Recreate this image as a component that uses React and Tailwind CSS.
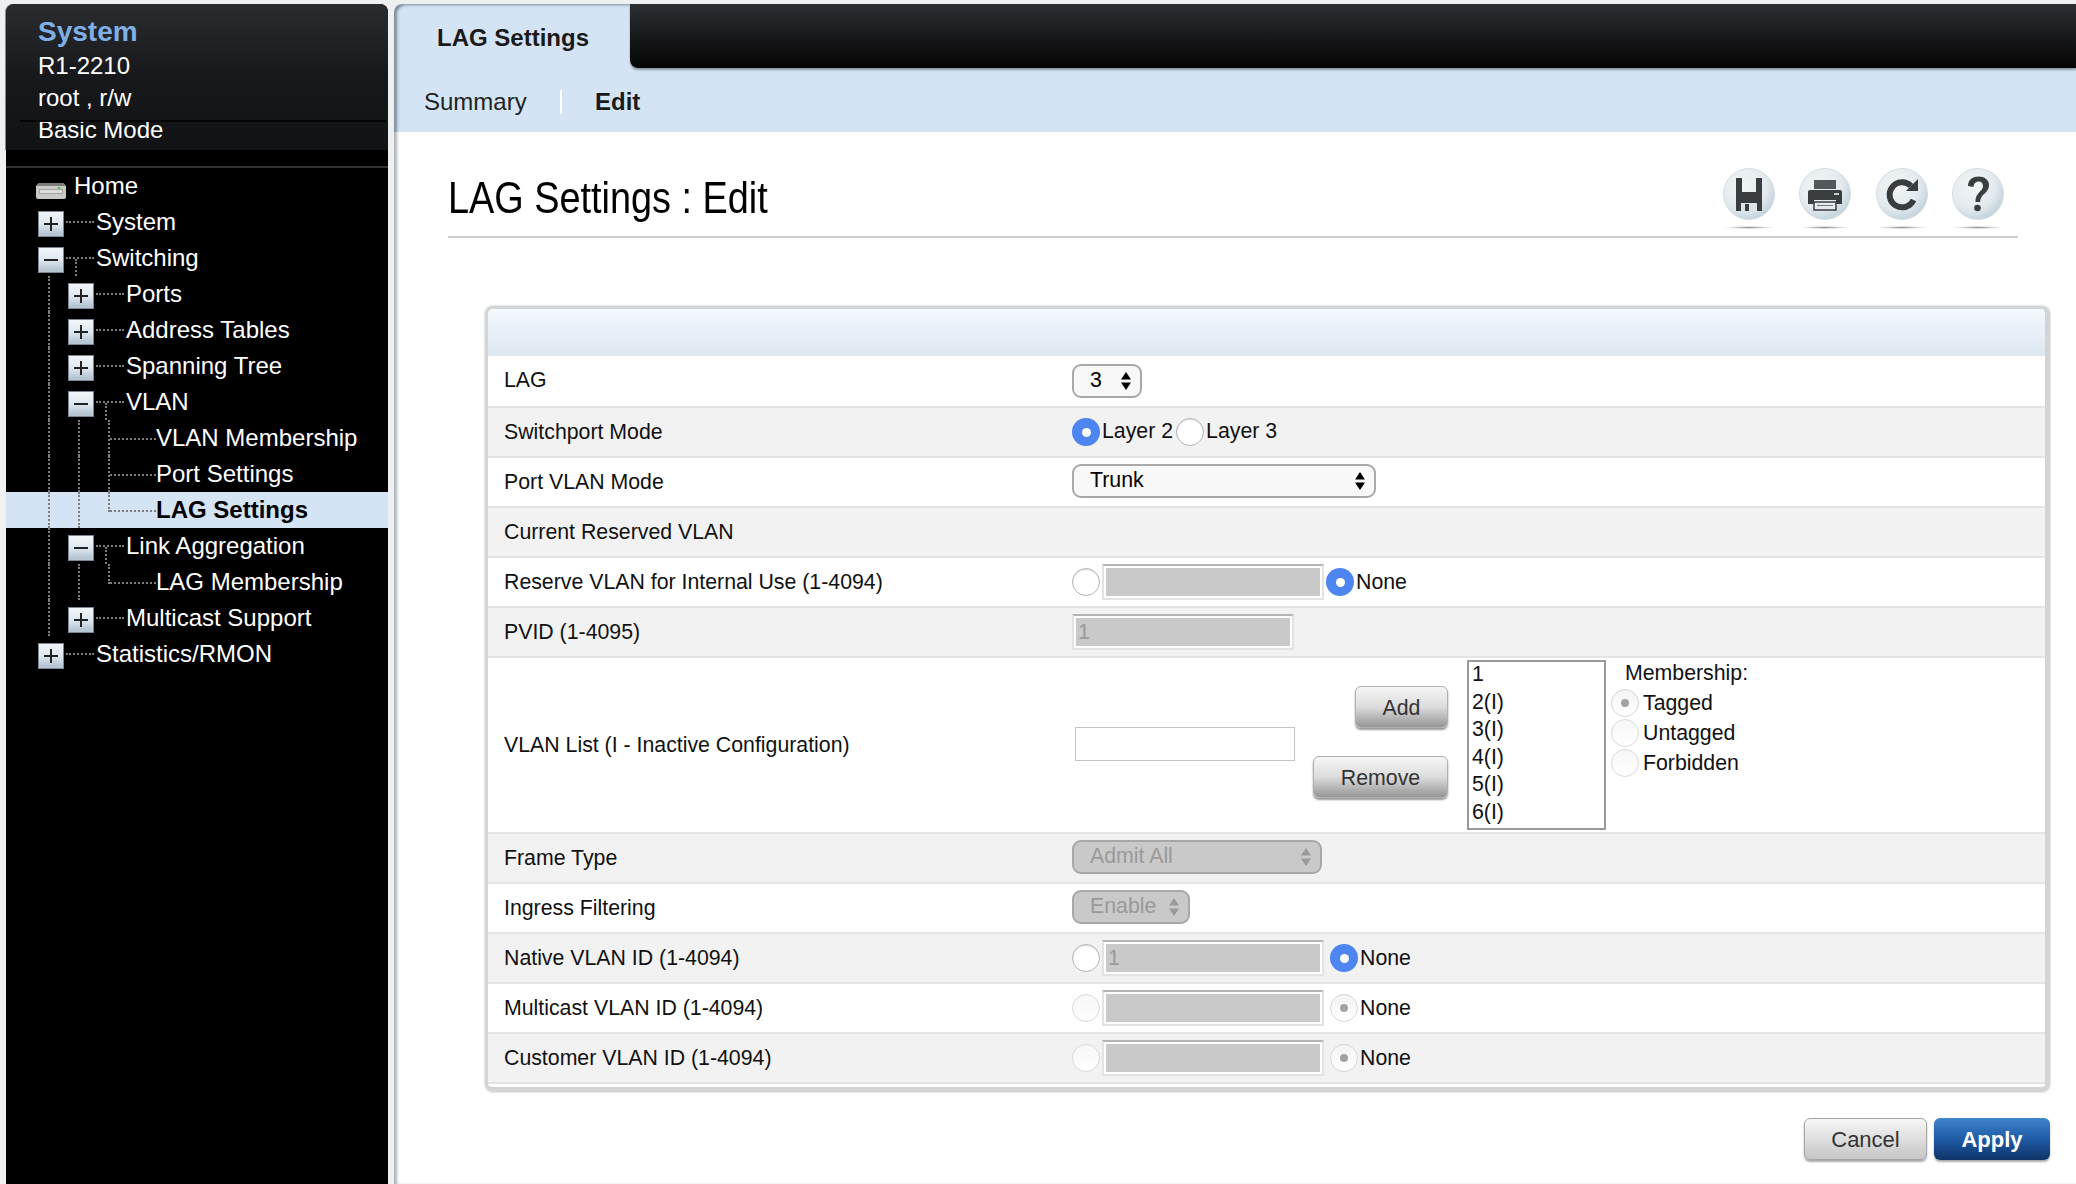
import React from 'react';

const tree = [
    { label: 'System', guides: 0, box: 'plus' },
    { label: 'Switching', guides: 0, box: 'minus', stub: true },
    { label: 'Ports', guides: 1, box: 'plus' },
    { label: 'Address Tables', guides: 1, box: 'plus' },
    { label: 'Spanning Tree', guides: 1, box: 'plus' },
    { label: 'VLAN', guides: 1, box: 'minus', stub: true },
    { label: 'VLAN Membership', guides: 2 },
    { label: 'Port Settings', guides: 2 },
    { label: 'LAG Settings', guides: 2, active: true, last: true },
    { label: 'Link Aggregation', guides: 1, box: 'minus', stub: true },
    { label: 'LAG Membership', guides: 2, last: true },
    { label: 'Multicast Support', guides: 1, box: 'plus' },
    { label: 'Statistics/RMON', guides: 0, box: 'plus' },
];

const Guide = () => (
    <div className="w-[30px] h-full shrink-0">
        <div className="ml-[10px] w-0 h-full border-l-2 border-dotted border-[#7d7d7d]"></div>
    </div>
);

const TreeBox = ({ type }) => (
    <div className="relative mt-[7px] w-[26px] h-[26px] shrink-0 flex items-center justify-center border border-[#7c8793] bg-gradient-to-b from-[#f2f6fa] via-[#dfe8f0] to-[#aebfce] shadow-[inset_0_0_1px_#fff]">
        <div className="w-[14px] h-[2px] bg-[#222]"></div>
        {type === 'plus' && <div className="absolute w-[2px] h-[14px] bg-[#222]"></div>}
    </div>
);

const TreeRow = ({ item }) => {
    const guides = [];
    for (let i = 0; i < item.guides; i++) guides.push(i);

    return (
        <div className={`flex h-[36px] pl-[32px] ${item.active ? 'bg-[#d4e4f4] text-black font-bold' : 'text-white'}`}>
            {guides.map((g) => <Guide key={g} />)}
            {item.box ? (
                <div className="flex h-full">
                    <TreeBox type={item.box} />
                    <div className="w-[32px] shrink-0">
                        <div className="mt-[17px] ml-[2px] w-[28px] border-t-2 border-dotted border-[#7d7d7d]"></div>
                        {item.stub && <div className="ml-[11px] w-0 h-[17px] border-l-2 border-dotted border-[#7d7d7d]"></div>}
                    </div>
                </div>
            ) : (
                <div className="w-[58px] h-full shrink-0">
                    <div className={`ml-[10px] w-0 border-l-2 border-dotted border-[#7d7d7d] ${item.last ? 'h-[20px]' : 'h-full'}`}></div>
                    <div className={`ml-[12px] w-[46px] border-t-2 border-dotted border-[#7d7d7d] ${item.last ? '-mt-[2px]' : '-mt-[18px]'}`}></div>
                </div>
            )}
            <span className="leading-[36px] whitespace-nowrap">{item.label}</span>
        </div>
    );
};

const Radio = ({ state = 'off', className = '' }) => {
    if (state === 'on') {
        return (
            <span className={`flex w-[28px] h-[28px] shrink-0 items-center justify-center rounded-full bg-[#4d86f0] ${className}`}>
                <span className="w-[9px] h-[9px] rounded-full bg-white"></span>
            </span>
        );
    }
    if (state === 'dot') {
        return (
            <span className={`flex w-[28px] h-[28px] shrink-0 items-center justify-center rounded-full border border-[#d6d6d6] bg-gradient-to-b from-[#f4f4f4] to-white ${className}`}>
                <span className="w-[8px] h-[8px] rounded-full bg-[#a3a3a3]"></span>
            </span>
        );
    }
    if (state === 'dim') {
        return <span className={`block w-[28px] h-[28px] shrink-0 rounded-full border border-[#d9d9d9] bg-gradient-to-b from-[#f7f7f7] to-white ${className}`}></span>;
    }
    return <span className={`block w-[28px] h-[28px] shrink-0 rounded-full border border-[#b5b5b5] bg-white shadow-[inset_0_1px_1px_#ddd] ${className}`}></span>;
};

const Arrows = ({ disabled }) => (
    <svg width="10" height="20" viewBox="0 0 10 20" className="shrink-0">
        <path d="M5 1 L10 8.5 H0z M0 11.500 H10 L5 19z" fill={disabled ? '#9a9a9a' : '#000'} />
    </svg>
);

const Select = ({ value, width, disabled, className = '-mt-[2px]' }) => (
    <div
        className={`flex items-center justify-between h-[34px] pl-[16px] pr-[9px] rounded-[9px] border-2 border-[#a8a8a8] ${width} ${className} ${disabled ? 'bg-[#c9c9c9] text-[#9a9a9a]' : 'bg-[#f8f8f8] text-black'}`}
    >
        <span>{value}</span>
        <Arrows disabled={disabled} />
    </div>
);

const DisabledInput = ({ value = '' }) => (
    <div className="w-[222px] h-[36px] shrink-0 border-2 border-[#e3e3e3] border-t-[#b4b4b4] bg-white p-[2px]">
        <div className="h-full bg-[#c9c9c9] text-[#9a9a9a] pl-[2px] leading-[28px]">{value}</div>
    </div>
);

const Row = ({ label, gray, height = 'h-[50px]', labelPad = 'pt-[2px]', children }) => (
    <div className={`flex items-center pl-[16px] border-b-2 border-[#e4e4e4] ${height} ${gray ? 'bg-[#f2f2f2]' : 'bg-white'}`}>
        <div className={`w-[568px] shrink-0 ${labelPad}`}>{label}</div>
        {children}
    </div>
);

const RadioInputRow = ({ label, gray, left, right, value, gap }) => (
    <Row label={label} gray={gray}>
        <Radio state={left} />
        <div className="ml-[2px]"><DisabledInput value={value} /></div>
        <Radio state={right} className={gap} />
        <span className="ml-[2px] pt-[2px]">None</span>
    </Row>
);

const GlassIcon = ({ children }) => (
    <div className="flex flex-col items-center w-[52px]">
        <svg width="52" height="52" viewBox="0 0 52 52" className="blur-[0.6px]">
            <defs>
                <radialGradient id="glass" cx="38%" cy="34%" r="75%">
                    <stop offset="0%" stopColor="#f2f5f6" />
                    <stop offset="60%" stopColor="#e3eaee" />
                    <stop offset="100%" stopColor="#bccdd8" />
                </radialGradient>
            </defs>
            <circle cx="26" cy="26" r="25.500" fill="url(#glass)" stroke="#d5dde2" />
            {children}
        </svg>
        <div className="mt-[6px] w-[50px] h-[3px] rounded-[50%] bg-[radial-gradient(closest-side,#9a9a9a,#ffffff)]"></div>
    </div>
);

const App = () => {
    return (
        <div className="flex w-[2076px] h-[1184px] overflow-hidden pt-[4px] bg-[#eef0f2] font-['Liberation_Sans',Arial,sans-serif]">
            {/* Sidebar */}
            <aside className="ml-[6px] w-[382px] shrink-0 bg-black rounded-t-lg text-[24px]">
                <div className="h-[146px] pl-[32px] pt-[10px] rounded-t-lg bg-gradient-to-b from-[#2a2c30] via-[#17181b] to-[#111214] shadow-[-1px_0_0_#888] text-white leading-[32.500px]">
                    <div className="text-[28px] font-bold text-[#80afe6] leading-[36px]">System</div>
                    <div>R1-2210</div>
                    <div className="-mt-[1px]">root , r/w</div>
                    <div className="relative">
                        Basic Mode
                        <div className="absolute -left-[18px] top-[6px] w-[366px] h-[2px] bg-[#050505]"></div>
                    </div>
                </div>
                <div className="mt-[16px] h-[2px] bg-[#333]"></div>
                <div className="flex h-[36px] pl-[30px] text-white">
                    <svg width="30" height="17" viewBox="0 0 30 17" className="mt-[14px]">
                        <path d="M3 1 H27 L30 4 V15 a2 2 0 0 1 -2 2 H2 a2 2 0 0 1 -2 -2 V4z" fill="#c9c9c6" />
                        <path d="M3 1 H27 L30 4 H0z" fill="#7d7d7a" />
                        <path d="M3 7 H27 V12 H3z" fill="#a3a3a0" />
                        <path d="M4 8 H26 V11 H4z" fill="#dededa" />
                        <circle cx="23" cy="6" r="1.300" fill="#58c058" />
                    </svg>
                    <span className="ml-[8px] leading-[36px]">Home</span>
                </div>
                {tree.map((item) => <TreeRow key={item.label} item={item} />)}
            </aside>

            {/* Main */}
            <main className="flex-1 ml-[6px] min-w-0 rounded-tl-lg overflow-hidden bg-white text-black shadow-[inset_4px_0_3px_-1px_#aeb5bc]">
                <div className="h-[128px] rounded-tl-lg bg-[#d4e4f4] shadow-[inset_4px_2px_3px_-1px_#7f8d9c]">
                    <div className="flex h-[64px]">
                        <div className="w-[236px] pl-[43px] pt-[16px] text-[24px] font-bold text-[#1a1a1a] leading-[36px]">LAG Settings</div>
                        <div className="flex-1 rounded-bl-lg bg-gradient-to-b from-[#2d2f34] to-[#060606] shadow-[0_2px_2px_#8b97a3]"></div>
                    </div>
                    <div className="flex items-center h-[64px] pl-[30px] pt-[4px]">
                        <span className="w-[136px] text-[24px] text-[#222]">Summary</span>
                        <span className="w-[2px] h-[24px] bg-white"></span>
                        <span className="ml-[33px] text-[24px] font-bold text-[#1a1a1a]">Edit</span>
                    </div>
                </div>

                <div className="ml-[54px] mr-[58px] h-[106px] pt-[36px] flex justify-between border-b-2 border-[#cccccc]">
                    <h1 className="text-[44px] leading-[60px] font-normal whitespace-nowrap origin-left scale-x-[0.86]">LAG Settings : Edit</h1>
                    <div className="flex gap-[24.500px] pr-[14px]">
                        <GlassIcon>
                            <path d="M13 10 h6 v14 h14 V10 h6 v33 H13z" fill="#3a3d40" />
                            <path d="M18 35 h16 v8 h-16z" fill="#dde3e6" />
                            <path d="M22 36 h4 v7 h-4z" fill="#3a3d40" />
                        </GlassIcon>
                        <GlassIcon>
                            <path d="M15 12 h22 v9 h-22z" fill="#55585b" />
                            <path d="M11 22 h30 a2 2 0 0 1 2 2 v12 h-6 v-4 H15 v4 H9 V24 a2 2 0 0 1 2-2z" fill="#3a3d40" />
                            <path d="M15 34 h22 v8 h-22z" fill="#e6eaec" stroke="#3a3d40" strokeWidth="1.500" />
                            <path d="M18 37.500 h16" stroke="#777" />
                            <path d="M35 26 h5" stroke="#c4c9cc" strokeWidth="2" />
                        </GlassIcon>
                        <GlassIcon>
                            <path d="M35 18 A12.500 12.500 0 1 0 37.500 32" fill="none" stroke="#3a3d40" strokeWidth="6" />
                            <path d="M42 11 V23 H30z" fill="#3a3d40" />
                        </GlassIcon>
                        <GlassIcon>
                            <path d="M16 18 C16 5 38 6 37 18 C36 26 29 25 28 34 H23.500 C23 24 31 24 31 18 C31 12 22 12 21.500 19z" fill="#3a3d40" />
                            <circle cx="25.500" cy="40" r="3.300" fill="#3a3d40" />
                        </GlassIcon>
                    </div>
                </div>

                {/* Form card */}
                <div className="ml-[91px] mr-[26px] mt-[68px] h-[786px] rounded-lg border-[3px] border-r-[5px] border-b-[5px] border-[#d2d4d6] shadow-[0_0_2px_#aaa] overflow-hidden text-[21.300px] text-[#111]">
                    <div className="h-[47px] bg-gradient-to-b from-[#f3f8fc] to-[#dde8f2]"></div>
                    <Row label="LAG" height="h-[52px]" labelPad="">
                        <Select value="3" width="w-[70px]" className="" />
                    </Row>
                    <Row label="Switchport Mode" gray>
                        <Radio state="on" />
                        <span className="ml-[2px]">Layer 2</span>
                        <Radio className="ml-[3px]" />
                        <span className="ml-[2px]">Layer 3</span>
                    </Row>
                    <Row label="Port VLAN Mode">
                        <Select value="Trunk" width="w-[304px]" />
                    </Row>
                    <Row label="Current Reserved VLAN" gray />
                    <RadioInputRow label="Reserve VLAN for Internal Use (1-4094)" left="off" right="on" gap="ml-[2px]" />
                    <Row label="PVID (1-4095)" gray>
                        <DisabledInput value="1" />
                    </Row>
                    <Row label="VLAN List (I - Inactive Configuration)" height="h-[176px]">
                        <input className="ml-[3px] w-[220px] h-[34px] -mt-[2px] shrink-0 border border-[#c4c4c4] bg-white" />
                        <div className="w-[153px] shrink-0 self-start pt-[28px] flex flex-col items-end gap-[28px] text-[#333]">
                            <button className="w-[93px] h-[42px] pt-[3px] rounded-md border border-[#b0b0b0] bg-gradient-to-b from-[#f6f6f6] via-[#dcdcdc] to-[#969696] shadow-[0_2px_2px_#999]">Add</button>
                            <button className="w-[135px] h-[42px] pt-[3px] rounded-md border border-[#b0b0b0] bg-gradient-to-b from-[#f6f6f6] via-[#dcdcdc] to-[#969696] shadow-[0_2px_2px_#999]">Remove</button>
                        </div>
                        <div className="ml-[19px] w-[139px] h-[170px] shrink-0 border-2 border-[#9a9a9a] bg-white pl-[3px] leading-[27.600px] overflow-hidden">
                            <div className="-mt-[1px]">
                                {['1', '2(I)', '3(I)', '4(I)', '5(I)', '6(I)'].map((v) => <div key={v}>{v}</div>)}
                            </div>
                        </div>
                        <div className="ml-[5px] self-start leading-[30px]">
                            <div className="pl-[14px]">Membership:</div>
                            <div className="flex items-center h-[30px]"><Radio state="dot" /><span className="ml-[4px]">Tagged</span></div>
                            <div className="flex items-center h-[30px]"><Radio state="dim" /><span className="ml-[4px]">Untagged</span></div>
                            <div className="flex items-center h-[30px]"><Radio state="dim" /><span className="ml-[4px]">Forbidden</span></div>
                        </div>
                    </Row>
                    <Row label="Frame Type" gray>
                        <Select value="Admit All" width="w-[250px]" disabled />
                    </Row>
                    <Row label="Ingress Filtering">
                        <Select value="Enable" width="w-[118px]" disabled />
                    </Row>
                    <RadioInputRow label="Native VLAN ID (1-4094)" gray left="off" right="on" value="1" gap="ml-[6px]" />
                    <RadioInputRow label="Multicast VLAN ID (1-4094)" left="dim" right="dot" gap="ml-[6px]" />
                    <RadioInputRow label="Customer VLAN ID (1-4094)" gray left="dim" right="dot" gap="ml-[6px]" />
                </div>

                <div className="flex justify-end gap-[7px] mt-[26px] mr-[26px] text-[22px]">
                    <button className="w-[123px] h-[42px] rounded-md border border-[#a5a5a5] bg-gradient-to-b from-[#f7f7f7] to-[#c6c6c6] text-[#333] shadow-[0_2px_2px_#aaa]">Cancel</button>
                    <button className="w-[116px] h-[42px] rounded-md bg-gradient-to-b from-[#3f84cc] via-[#1f5ba6] to-[#0e3468] text-white font-bold shadow-[0_2px_2px_#aaa]">Apply</button>
                </div>
            </main>
        </div>
    );
};

export default App;
